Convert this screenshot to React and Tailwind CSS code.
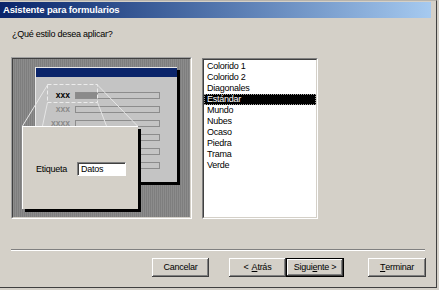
const styles = [
  "Colorido 1",
  "Colorido 2",
  "Diagonales",
  "Estándar",
  "Mundo",
  "Nubes",
  "Ocaso",
  "Piedra",
  "Trama",
  "Verde",
];

function Button({ children, isDefault, className = "" }) {
  return (
    <div
      className={`h-[19px] flex items-center justify-center text-black bg-[#d4d0c8] ${
        isDefault
          ? "border border-black shadow-[inset_-1px_-1px_#404040,inset_1px_1px_#ffffff,inset_-2px_-2px_#808080]"
          : "shadow-[inset_-1px_-1px_#404040,inset_1px_1px_#ffffff,inset_-2px_-2px_#808080]"
      } ${className}`}
    >
      {children}
    </div>
  );
}

function FieldRow({ top, label, bold, filled }) {
  return (
    <div className="absolute left-0 flex items-center h-[7px]" style={{ top }}>
      <div
        className={`w-[34px] text-right text-[8.5px] leading-[7px] font-bold tracking-normal ${
          bold ? "text-black" : "text-[#8a8a8a]"
        }`}
      >
        {label}
      </div>
      <div className="ml-[5px] w-[85px] h-[7px] border border-[#8c8c8c] flex">
        {filled && <div className="w-[22px] h-full bg-[#8a8a8a]" />}
      </div>
    </div>
  );
}

function Preview() {
  return (
    <div className="w-[181px] h-[162px] border-t border-l border-[#a0a0a0] border-r border-b border-r-white border-b-white">
      <div className="relative w-full h-full border-t border-l border-[#404040] border-r border-b border-r-[#d4d0c8] border-b-[#d4d0c8] bg-[repeating-linear-gradient(90deg,#8c8c8c_0px,#8c8c8c_1px,#7e7e7e_1px,#7e7e7e_2px)] overflow-hidden">
        {/* mock form */}
        <div className="absolute left-[22px] top-[8px] w-[142px] h-[115px] bg-[#c4c4c4] border-t border-l border-[#e8e8e8] shadow-[3px_3px_0_#000]">
          <div className="h-[9px] bg-[#0a246a]" />
          <div className="relative">
            <FieldRow top={15} label="xxx" bold filled />
            <FieldRow top={29} label="xxx" />
            <FieldRow top={43} label="xxxx" />
            <FieldRow top={57} label="" />
            <FieldRow top={71} label="" />
            <FieldRow top={85} label="" />
          </div>
        </div>

        {/* zoom lines */}
        <svg className="absolute left-0 top-0" width="179" height="160">
          <rect
            x="34.5"
            y="25.5"
            width="50"
            height="18"
            fill="none"
            stroke="#ececec"
            strokeDasharray="4 2"
          />
          <g stroke="#e6e6e6" strokeWidth="1">
            <line x1="34.5" y1="26" x2="9.5" y2="67" />
            <line x1="84.5" y1="26" x2="124.5" y2="67" />
            <line x1="34.5" y1="43.5" x2="29.5" y2="67" />
            <line x1="84.5" y1="43.5" x2="93.5" y2="67" />
          </g>
        </svg>

        {/* magnified popup */}
        <div className="absolute left-[9px] top-[67px] w-[116px] h-[83px] bg-[#d4d0c8] border-t border-l border-white shadow-[3px_3px_0_#000]">
          <div className="flex items-center pl-[13px] pt-[35px] gap-[10px]">
            <span className="leading-[12px]">Etiqueta</span>
            <div className="w-[49px] h-[14px] bg-white border-t border-l border-[#808080] border-r border-b border-r-white border-b-white">
              <div className="h-full border-t border-l border-[#404040] pl-[2px] leading-[11px]">
                Datos
              </div>
            </div>
          </div>
        </div>
      </div>
    </div>
  );
}

function StyleList() {
  return (
    <div className="mt-[1px] w-[116px] h-[161px] border-t border-l border-[#808080] border-r border-b border-r-white border-b-white">
      <div className="w-full h-full bg-white border-t border-l border-[#404040] border-r border-b border-r-[#d4d0c8] border-b-[#d4d0c8] pt-[1px]">
        {styles.map((name) => (
          <div
            key={name}
            className={`h-[11px] leading-[9px] pl-[2px] ${
              name === "Estándar"
                ? "bg-black text-white border border-dotted border-[#a0a0a0]"
                : "text-black border border-transparent"
            }`}
          >
            {name}
          </div>
        ))}
      </div>
    </div>
  );
}

export default function App() {
  return (
    <div className="w-[439px] h-[290px] bg-[#d4d0c8] overflow-hidden font-['Liberation_Sans',Arial,sans-serif] text-[9px] tracking-[-0.25px]">
      <div className="w-[437px] h-[288px] border-r border-b border-[#404040] border-t border-t-[#b8b4ac]">
        <div className="mt-[1px] w-[431px] h-[16px] bg-linear-to-r from-[#0a246a] to-[#a6caf0] flex items-center pl-[3px]">
          <span className="text-white font-bold text-[9.5px] tracking-[-0.15px] leading-[14px]">
            Asistente para formularios
          </span>
        </div>

        <div className="pl-[12px] pt-[10px] leading-[12px] text-black">
          ¿Qué estilo desea aplicar?
        </div>

        <div className="mt-[17px] flex pl-[11px] gap-[10px]">
          <Preview />
          <StyleList />
        </div>

        <div className="mt-[30px] ml-[11px] w-[414px] border-t border-[#808080] border-b border-b-white" />

        <div className="mt-[7px] flex">
          <Button className="ml-[152px] w-[57px]">Cancelar</Button>
          <Button className="ml-[20px] w-[57px]">
            &lt; <span className="underline ml-[3px]">A</span>trás
          </Button>
          <Button isDefault className="w-[58px]">
            Sigui<span className="underline">e</span>nte &gt;
          </Button>
          <Button className="ml-[24px] w-[58px]">
            <span className="underline">T</span>erminar
          </Button>
        </div>
      </div>
    </div>
  );
}
